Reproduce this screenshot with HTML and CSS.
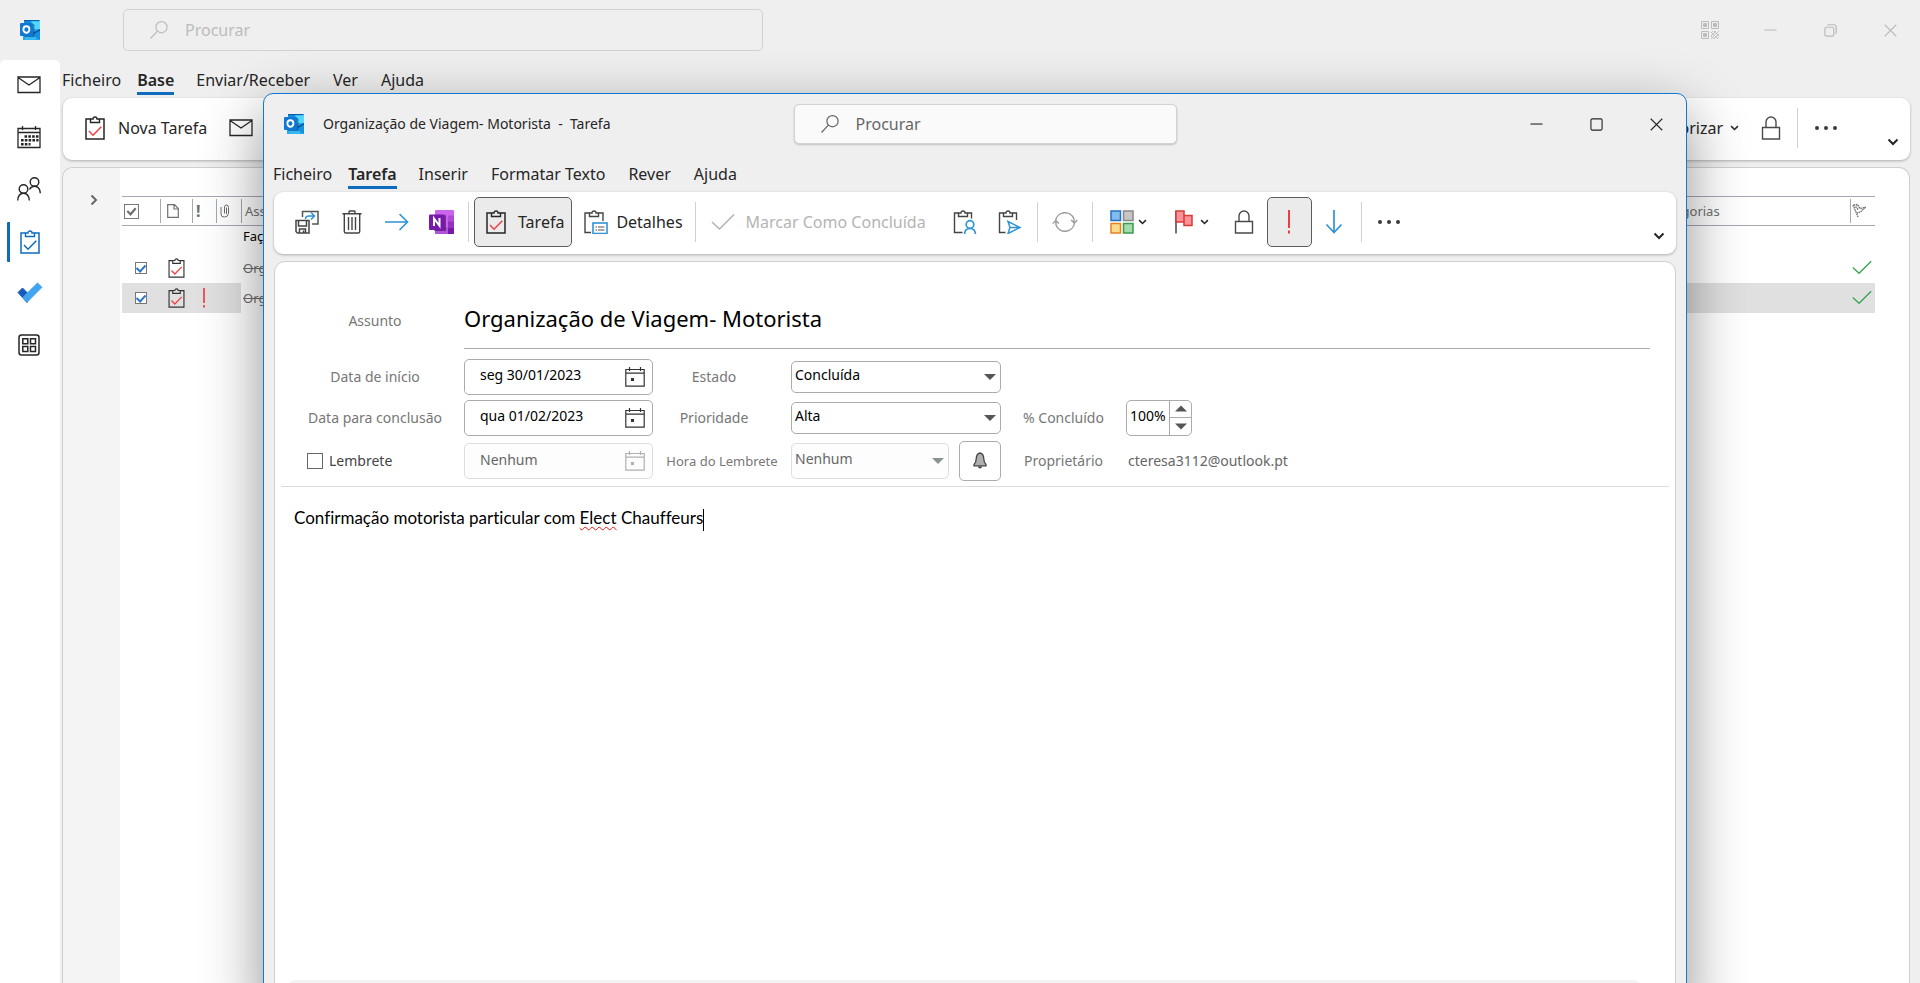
FILE: index.html
```html
<!DOCTYPE html>
<html lang="pt">
<head>
<meta charset="utf-8">
<title>Organização de Viagem- Motorista - Tarefa</title>
<link rel="stylesheet" href="styles.css">
</head>
<body>
<svg class="sprite" aria-hidden="true">
  <symbol id="outlook" viewBox="0 0 20 20">
    <path d="M4 0h15.500v10H4z" fill="#28a8ea"/>
    <path d="M4 0h7.500v5H4z" fill="#1490df"/><path d="M11.500 1H19.500v8l-8 0z" fill="#50d9ff"/><path d="M4 0h15.500v1.200H4z" fill="#0b5fb0"/>
    <path d="M3 9h17v11H3z" fill="#28a8ea"/><path d="M20 9.500v10.500L9 13z" fill="#1490df"/><path d="M13 13l7-4v1.500l-6 3.500z" fill="#0a4f8f"/>
    <path d="M5 17h11v1.500q0 1.500-2 1.500H5z" fill="#35b8f1"/>
    <rect x="4" y="4" width="10.500" height="13" rx="1" fill="#0a4a80" opacity=".55"/>
    <rect x="0" y="3" width="13" height="13" rx="1" fill="#0f78d4"/>
    <ellipse cx="6.400" cy="9.500" rx="3" ry="3.200" fill="none" stroke="#fff" stroke-width="1.900"/>
  </symbol>
  <symbol id="search" viewBox="0 0 20 20"><g fill="none" stroke="currentColor" stroke-width="1.200"><circle cx="12.500" cy="7.200" r="5.600"/><path d="M8.400 11.200L1.500 18.500"/></g></symbol>
  <symbol id="mail" viewBox="0 0 24 24"><path d="M1 4h22v15.500H1zM1 4.500l11 7.500 11-7.500" fill="none" stroke="currentColor" stroke-width="1.300"/></symbol>
  <symbol id="calendar" viewBox="0 0 24 24"><path d="M1 3.500h22v19H1zM1 7.500h22M5.500 1v4M18.500 1v4" fill="none" stroke="currentColor" stroke-width="1.300"/><path d="M7.500 11.500h14M4 15.300h17.500M4 19.200h9.500" stroke="currentColor" stroke-width="2.600" stroke-dasharray="2.600 1.200" fill="none"/></symbol>
  <symbol id="people" viewBox="0 0 24 24"><g fill="none" stroke="currentColor" stroke-width="1.400"><circle cx="6.500" cy="12" r="4.300"/><path d="M.700 23.500c.3-4.500 2.500-7.200 5.800-7.200s5.500 2.700 5.800 7.200"/><circle cx="17.500" cy="5" r="4.300"/><path d="M12.500 12.500c1-2 2.700-3.200 5-3.200 3.300 0 5.500 2.700 5.800 7"/></g></symbol>
  <symbol id="clip" viewBox="0 0 20 24"><path d="M5.500 3H1v20h18V3h-4.500" fill="none" stroke="currentColor" stroke-width="1.500"/><path d="M5.500 6.500v-3.500h2.500a2 2 0 0 1 4 0h2.500v3.500z" fill="none" stroke="currentColor" stroke-width="1.400"/></symbol>
  <symbol id="task" viewBox="0 0 20 24"><use href="#clip" width="20" height="24"/><path class="tick" d="M4 15l4 4.200 8.300-8.500" fill="none" stroke-width="1.500"/></symbol>
  <symbol id="todo" viewBox="0 0 26 22"><path d="M1 10.500l4.500-4.500 6.500 6.500-2 8z" fill="#185abd" stroke="#185abd" stroke-linejoin="round"/><path d="M5.500 15.500L20.500.800l4.700 4.500L10 20.500z" fill="#41a5ee" stroke="#41a5ee" stroke-linejoin="round" stroke-width=".5"/></symbol>
  <symbol id="apps" viewBox="0 0 22 22"><g fill="none" stroke="currentColor" stroke-width="1.500"><rect x="1" y="1" width="20" height="20" rx="2.500"/><path d="M4.800 4.800h5v5h-5zM12.500 4.800h5v5h-5zM4.800 12.400h5v5h-5zM12.500 12.400h5v5h-5z"/></g></symbol>
  <symbol id="qr" viewBox="0 0 18 18"><path d="M.5.5h7v7h-7zM10.500.5h7v7h-7zM.5 10.500h7v7h-7z" fill="none" stroke="currentColor"/><path d="M2.500 2.500h3v3h-3zM12.500 2.500h3v3h-3zM2.500 12.500h3v3h-3z" fill="currentColor" stroke="currentColor"/><path d="M10 12l2-2M10 15l5-5M10 18l8-8M13 18l5-5M16 18l2-2M10 15l3 3M10 11l7 7M13 10l5 5" stroke="currentColor" stroke-width=".9"/></symbol>
  <symbol id="min" viewBox="0 0 14 14"><path d="M.5 6.500h13" stroke="currentColor" stroke-width="1.200"/></symbol>
  <symbol id="restore" viewBox="0 0 14 14"><g fill="none" stroke="currentColor" stroke-width="1.300"><rect x="1" y="3.500" width="9.500" height="9.500" rx="1.500"/><path d="M3.500 1.500q.5-.700 1.500-.700h5.500q2.700 0 2.700 2.700V9q0 1-.8 1.500"/></g></symbol>
  <symbol id="max" viewBox="0 0 14 14"><rect x="1" y="1" width="12" height="12" rx="1.300" fill="none" stroke="currentColor" stroke-width="1.200"/></symbol>
  <symbol id="close" viewBox="0 0 14 14"><path d="M.8.800l12.400 12.400M13.200.800L.8 13.200" stroke="currentColor" stroke-width="1.200"/></symbol>
  <symbol id="chev" viewBox="0 0 12 8"><path d="M1.500 1.500L6 6l4.500-4.500" fill="none" stroke="currentColor" stroke-width="2"/></symbol>
  <symbol id="lock" viewBox="0 0 20 24"><path d="M1.500 11.500h17v11.500h-17zM5 11.500V6a5 5 0 0 1 10 0v5.500" fill="none" stroke="#4a4a4a" stroke-width="1.400"/></symbol>
  <symbol id="dots" viewBox="0 0 24 6"><g fill="#3a3a3a"><circle cx="3" cy="3" r="2"/><circle cx="12" cy="3" r="2"/><circle cx="21" cy="3" r="2"/></g></symbol>
  <symbol id="done" viewBox="0 0 24 18"><path d="M1 9l7.500 7L23 1.500" fill="none" stroke="currentColor" stroke-width="1.600"/></symbol>
  <symbol id="saveclose" viewBox="0 0 24 24"><path d="M7.500 7V1.500H23V14h-6" fill="none" stroke="#555" stroke-width="1.500"/><path d="M10.500 9q0-3 3.500-3H19M16 2.500L19.500 6 16 9.500" fill="none" stroke="#2f93d6" stroke-width="1.500"/><path d="M1 10.500h13v12.500H2.500L1 21.500zM3.500 10.500v5.500h8v-5.500M4.500 23v-4h6v4M8.500 20.500V23" fill="#fff" stroke="#444" stroke-width="1.500"/></symbol>
  <symbol id="trash" viewBox="0 0 20 24"><path d="M.5 3.800h19M7 3.500v-1.800q0-.700.700-.700h4.600q.7 0 .7.700v1.800M2.300 4v17.500q0 1.500 1.500 1.500h12.400q1.500 0 1.500-1.500V4M6.500 7v13M10 7v13M13.500 7v13" fill="none" stroke="#444" stroke-width="1.400"/></symbol>
  <symbol id="arrow" viewBox="0 0 24 18"><path d="M0 9h22.500M14.500 1l8 8-8 8" fill="none" stroke="#2f93d6" stroke-width="1.600"/></symbol>
  <symbol id="onenote" viewBox="0 0 26 24"><rect x="6" y="0" width="19" height="24" rx="1" fill="#ca64ea"/><path d="M19 5.500h6v6h-6z" fill="#ae4bd5"/><path d="M19 11.500h6v6h-6z" fill="#9332bf"/><path d="M6 17.500h19v6.500H7q-1 0-1-1z" fill="#b152d9"/><path d="M19 17.500h6V23q0 1-1 1h-5z" fill="#7719aa"/><rect x="5" y="5" width="12" height="16" rx="1" fill="#3d0860" opacity=".6"/><rect x="0" y="4.500" width="15.500" height="15.500" rx="1" fill="#7719aa"/><path d="M5 16V8.500l5.500 7.300V8" fill="none" stroke="#fff" stroke-width="2"/></symbol>
  <symbol id="details" viewBox="0 0 24 24"><path d="M5.500 3H1v19.500h6M14.500 3H19v8" fill="none" stroke="#444" stroke-width="1.400"/><path d="M5.500 6.500V3H8a2 2 0 0 1 4 0h2.500v3.500z" fill="none" stroke="#444" stroke-width="1.400"/><rect x="9" y="13" width="14" height="10.500" fill="#fff" stroke="#2f93d6" stroke-width="1.600"/><path d="M11.500 17h1.500M14 17h6.500M11.500 20h1.500M14 20h6.500" stroke="#555" stroke-width="1.200"/></symbol>
  <symbol id="assign" viewBox="0 0 24 24"><path d="M5.500 3H1.500v19.500h8M14.500 3H18.500v5.500" fill="none" stroke="#444" stroke-width="1.400"/><path d="M5.500 6.500V3H8a2 2 0 0 1 4 0h2.500v3.500z" fill="none" stroke="#444" stroke-width="1.400"/><g fill="none" stroke="#2f93d6" stroke-width="1.700"><circle cx="17" cy="14.500" r="3.800"/><path d="M11.500 24q.5-5.500 5.500-5.500t5.500 5.500"/></g></symbol>
  <symbol id="sendtask" viewBox="0 0 24 24"><path d="M5.500 3H1.500v19.500h6M14.500 3H18.500v7" fill="none" stroke="#444" stroke-width="1.400"/><path d="M5.500 6.500V3H8a2 2 0 0 1 4 0h2.500v3.500z" fill="none" stroke="#444" stroke-width="1.400"/><path d="M10 11.500l12 6-12 6 2-6zM12 17.500h9" fill="none" stroke="#2f93d6" stroke-width="1.500"/></symbol>
  <symbol id="recur" viewBox="0 0 26 24"><g fill="none" stroke="#999" stroke-width="1.400"><path d="M3.500 11A9.600 9.600 0 0 1 22 9v3.500M22.500 13A9.600 9.600 0 0 1 4 15v-4"/><path d="M19 10l3.300 3 3-3M.7 13.500L4 10.800l3 2.700"/></g></symbol>
  <symbol id="cats" viewBox="0 0 24 24"><g stroke-width="1.500"><path d="M1 1h9.500v9.500H1z" fill="#83bbec" stroke="#2673bd"/><path d="M13.500 1H23v9.500h-9.500z" fill="#c8c6c4" stroke="#8a8886"/><path d="M1 13.500h9.500V23H1z" fill="#fbdb8c" stroke="#e58323"/><path d="M13.500 13.500H23V23h-9.500z" fill="#a1dcaa" stroke="#3b9b4f"/></g></symbol>
  <symbol id="flag" viewBox="0 0 18 24"><path d="M1 1v22.500" stroke="#444" stroke-width="1.500"/><path d="M1 1h8v4.500h8v10H9V12H1z" fill="#ff9199" stroke="#d83b34" stroke-width="1.500"/><path d="M9 5.500V12" stroke="#d83b34" stroke-width="1.500"/></symbol>
  <symbol id="bang" viewBox="0 0 6 24"><path d="M3 0v18M3 20.500v3" stroke="#ef3e42" stroke-width="2"/></symbol>
  <symbol id="down" viewBox="0 0 18 24"><path d="M9 0v22.500M1.500 14.500L9 22.500l7.500-8" fill="none" stroke="#2f93d6" stroke-width="1.700"/></symbol>
  <symbol id="datepick" viewBox="0 0 20 20"><path d="M.8 2.500h18.400v16.700H.8zM.8 6.200h18.400M4.500 0v4M15.500 0v4" fill="none" stroke="currentColor" stroke-width="1.200"/><path d="M6 11h3v3H6z" fill="currentColor"/></symbol>
  <symbol id="tri" viewBox="0 0 12 6"><path d="M0 0h12L6 6z" fill="currentColor"/></symbol>
  <symbol id="bell" viewBox="0 0 14 18"><path d="M7 1C4 1.500 3.300 4 3.200 7q-.1 3.500-2.200 5.500v1.300h12v-1.300q-2.100-2-2.200-5.500C10.700 4 10 1.500 7 1z" fill="#b0b0b0" stroke="#444" stroke-width="1.300"/><path d="M4.800 14.500q.5 2 2.200 2t2.200-2z" fill="#444"/></symbol>
  <symbol id="page" viewBox="0 0 12 14"><path d="M.7.700h6.800l3.800 3.800v8.800H.7zM7 .700v4.300h4.300" fill="none" stroke="currentColor" stroke-width="1.200"/></symbol>
  <symbol id="pin" viewBox="0 0 10 14"><path d="M1 3v7q0 3 3 3h.5q3.500 0 4-3.500V3.500Q8.500 1 6.500 1T4.500 3v6.500" fill="none" stroke="currentColor"/><path d="M6.500 3.500V10" stroke="currentColor"/></symbol>
  <symbol id="box" viewBox="0 0 16 16"><rect x=".5" y=".5" width="15" height="15" fill="none" stroke="currentColor"/><path d="M3.500 7.500L7 11l5.500-6.500" fill="none" stroke="currentColor" stroke-width="2.300"/></symbol>
  <symbol id="flagcol" viewBox="0 0 14 16"><path d="M1 2l5 12M1.500 2l4-.5 2.500 4 5-1-4.500 4.500-3.500 1M3.500 3.500l3 3.500" fill="none" stroke="currentColor" stroke-width="1.400" stroke-dasharray="1.600 .700"/></symbol>
</svg>

<div class="app">
  <header class="app-bar">
    <svg class="logo"><use href="#outlook"/></svg>
    <label class="search search-main"><svg><use href="#search"/></svg><input type="text" placeholder="Procurar" aria-label="Procurar"></label>
    <div class="win-controls faded">
      <button aria-label="Código"><svg class="i18"><use href="#qr"/></svg></button>
      <button aria-label="Minimizar"><svg class="i13"><use href="#min"/></svg></button>
      <button aria-label="Restaurar"><svg class="i13"><use href="#restore"/></svg></button>
      <button aria-label="Fechar"><svg class="i13"><use href="#close"/></svg></button>
    </div>
  </header>
  <div class="app-body">
    <nav class="rail">
      <button aria-label="Correio"><svg class="i24"><use href="#mail"/></svg></button>
      <button aria-label="Calendário"><svg class="i24"><use href="#calendar"/></svg></button>
      <button aria-label="Pessoas"><svg class="i24"><use href="#people"/></svg></button>
      <button class="current" aria-label="Tarefas"><svg class="i20"><use href="#task"/></svg></button>
      <button aria-label="To Do"><svg class="i26"><use href="#todo"/></svg></button>
      <button aria-label="Mais aplicações"><svg class="i22"><use href="#apps"/></svg></button>
    </nav>
    <div class="main">
      <nav class="tabs">
        <button class="file">Ficheiro</button><button class="active">Base</button><button>Enviar/Receber</button><button>Ver</button><button>Ajuda</button>
      </nav>
      <div class="ribbon main-ribbon">
        <button class="wide"><svg class="i20"><use href="#task"/></svg>Nova Tarefa</button>
        <button class="tool" aria-label="Novo e-mail"><svg class="i24"><use href="#mail"/></svg></button>
        <div class="ribbon-right">
          <button class="wide">Categorizar<svg class="i8"><use href="#chev"/></svg></button>
          <button class="tool" aria-label="Privado"><svg class="i20"><use href="#lock"/></svg></button>
          <i class="sep"></i>
          <button class="tool" aria-label="Mais"><svg class="idots"><use href="#dots"/></svg></button>
        </div>
        <button class="collapse" aria-label="Opções do friso"><svg><use href="#chev"/></svg></button>
      </div>
      <section class="list-panel">
        <div class="folders"><button aria-label="Expandir"><svg><use href="#chev"/></svg></button></div>
        <div class="list">
          <table>
            <colgroup><col class="c-done"><col class="c-type"><col class="c-small"><col class="c-clip"><col><col class="c-cat"><col class="c-flag"></colgroup>
            <thead><tr>
              <th><svg class="h-box"><use href="#box"/></svg></th>
              <th><svg class="h-page"><use href="#page"/></svg></th>
              <th class="mark">!</th>
              <th><svg class="h-pin"><use href="#pin"/></svg></th>
              <th>Assunto</th><th>Categorias</th>
              <th><svg class="h-flag"><use href="#flagcol"/></svg></th>
            </tr></thead>
            <tbody>
              <tr class="new"><td colspan="4"></td><td colspan="3">Faça clique aqui</td></tr>
              <tr><td class="mid"><input type="checkbox" checked aria-label="Concluída"></td><td><svg class="t-task"><use href="#task"/></svg></td><td></td><td></td><td class="struck">Organização</td><td></td><td class="green"><svg><use href="#done"/></svg></td></tr>
              <tr class="selected"><td class="mid"><input type="checkbox" checked aria-label="Concluída"></td><td><svg class="t-task"><use href="#task"/></svg></td><td><svg class="t-bang"><use href="#bang"/></svg></td><td></td><td class="struck">Organização</td><td></td><td class="green"><svg><use href="#done"/></svg></td></tr>
            </tbody>
          </table>
        </div>
      </section>
    </div>
  </div>

  <section class="window" role="dialog" aria-label="Tarefa">
    <header class="title-bar">
      <div class="title"><svg class="logo"><use href="#outlook"/></svg><span>Organização de Viagem- Motorista&nbsp; -&nbsp; Tarefa</span></div>
      <label class="search"><svg><use href="#search"/></svg><input type="text" placeholder="Procurar" aria-label="Procurar"></label>
      <div class="win-controls">
        <button aria-label="Minimizar"><svg class="i13"><use href="#min"/></svg></button>
        <button aria-label="Maximizar"><svg class="i13"><use href="#max"/></svg></button>
        <button aria-label="Fechar"><svg class="i13"><use href="#close"/></svg></button>
      </div>
    </header>
    <nav class="tabs">
      <button class="file">Ficheiro</button><button class="active">Tarefa</button><button>Inserir</button><button>Formatar Texto</button><button>Rever</button><button>Ajuda</button>
    </nav>
    <div class="ribbon">
      <button class="tool" aria-label="Guardar e fechar"><svg class="i24"><use href="#saveclose"/></svg></button>
      <button class="tool" aria-label="Eliminar"><svg class="i20"><use href="#trash"/></svg></button>
      <button class="tool" aria-label="Reencaminhar"><svg class="i24"><use href="#arrow"/></svg></button>
      <button class="tool" aria-label="OneNote"><svg class="i26"><use href="#onenote"/></svg></button>
      <i class="sep"></i>
      <button class="wide pressed"><svg class="i20"><use href="#task"/></svg>Tarefa</button>
      <button class="wide near"><svg class="i24"><use href="#details"/></svg>Detalhes</button>
      <i class="sep"></i>
      <button class="wide off" disabled><svg class="i24"><use href="#done"/></svg>Marcar Como Concluída</button>
      <button class="tool" aria-label="Atribuir tarefa"><svg class="i24"><use href="#assign"/></svg></button>
      <button class="tool" aria-label="Enviar relatório"><svg class="i24"><use href="#sendtask"/></svg></button>
      <i class="sep"></i>
      <button class="tool" aria-label="Periodicidade"><svg class="i26"><use href="#recur"/></svg></button>
      <i class="sep"></i>
      <button class="menu" aria-label="Categorizar"><svg class="i24"><use href="#cats"/></svg><svg class="i8"><use href="#chev"/></svg></button>
      <button class="menu" aria-label="Dar seguimento"><svg class="i24"><use href="#flag"/></svg><svg class="i8"><use href="#chev"/></svg></button>
      <button class="tool" aria-label="Privado"><svg class="i20"><use href="#lock"/></svg></button>
      <button class="tool pressed" aria-label="Importância alta"><svg class="i20"><use href="#bang"/></svg></button>
      <button class="tool" aria-label="Importância baixa"><svg class="i20"><use href="#down"/></svg></button>
      <i class="sep"></i>
      <button class="tool" aria-label="Mais"><svg class="idots"><use href="#dots"/></svg></button>
      <button class="collapse" aria-label="Opções do friso"><svg><use href="#chev"/></svg></button>
    </div>
    <section class="form-panel">
      <form class="form">
        <div class="subject-row">
          <label for="assunto">Assunto</label>
          <input id="assunto" type="text" value="Organização de Viagem- Motorista">
        </div>
        <div class="fields">
          <label for="inicio">Data de início</label>
          <div class="box date"><input id="inicio" type="text" value="seg 30/01/2023"><button type="button" aria-label="Escolher data"><svg><use href="#datepick"/></svg></button></div>
          <label class="second" for="estado">Estado</label>
          <div class="box pick"><select id="estado"><option>Concluída</option></select><svg><use href="#tri"/></svg></div>
          <span></span><span></span>

          <label for="conclusao">Data para conclusão</label>
          <div class="box date"><input id="conclusao" type="text" value="qua 01/02/2023"><button type="button" aria-label="Escolher data"><svg><use href="#datepick"/></svg></button></div>
          <label class="second" for="prioridade">Prioridade</label>
          <div class="box pick"><select id="prioridade"><option>Alta</option></select><svg><use href="#tri"/></svg></div>
          <label for="perc">% Concluído</label>
          <div class="box spin"><input id="perc" type="text" value="100%"><div class="steps"><button type="button" aria-label="Aumentar"><svg class="up"><use href="#tri"/></svg></button><button type="button" aria-label="Diminuir"><svg><use href="#tri"/></svg></button></div></div>

          <label class="reminder"><input type="checkbox">Lembrete</label>
          <div class="box date dim"><input type="text" value="Nenhum" disabled aria-label="Data do lembrete"><button type="button" disabled aria-label="Escolher data"><svg><use href="#datepick"/></svg></button></div>
          <label class="small" for="hora">Hora do Lembrete</label>
          <div class="hour"><div class="box pick dim"><select id="hora" disabled><option>Nenhum</option></select><svg><use href="#tri"/></svg></div><button type="button" class="bell" aria-label="Som do lembrete"><svg><use href="#bell"/></svg></button></div>
          <label for="dono">Proprietário</label>
          <input id="dono" class="owner" type="text" readonly value="cteresa3112@outlook.pt">
        </div>
      </form>
      <div class="note" role="textbox" aria-label="Notas" tabindex="0">Confirmação motorista particular com <span class="misspelt">Elect</span> Chauffeurs<i class="caret"></i></div>
      <div class="foot"></div>
    </section>
  </section>
</div>
</body>
</html>
```
FILE: styles.css
```css
* { box-sizing: border-box; }
html, body { height: 100%; }
body { --tick: #ef3e42; margin: 0; overflow: hidden; background: #efefef; color: #262626; font: 16px/22px "Noto Sans", "Open Sans", sans-serif; }
button, input, select { font: inherit; color: inherit; margin: 0; padding: 0; border: 0; background: none; outline: 0; }
svg { display: block; flex: none; overflow: visible; }
.sprite { position: absolute; width: 0; height: 0; }

.i8 { width: 9px; height: 6px; }
.i13 { width: 13px; height: 13px; }
.i18 { width: 18px; height: 18px; }
.i20 { width: 20px; height: 24px; }
.i22 { width: 22px; height: 22px; }
.i24 { width: 24px; height: 24px; }
.i26 { width: 26px; height: 24px; }
.idots { width: 24px; height: 6px; }
.logo { width: 20px; height: 20px; }
.tick { stroke: var(--tick); }

.app { position: relative; height: 100vh; display: flex; flex-direction: column; overflow: hidden; }
.app-bar { height: 60px; flex: none; display: flex; align-items: center; padding-left: 20px; }
.search { display: flex; align-items: center; gap: 16px; height: 40px; padding-left: 25px; border: 1px solid #d2d2d2; border-radius: 5px; background: #fafafa; color: #666; box-shadow: 0 1px 2px rgba(0,0,0,.2); }
.search svg { width: 20px; height: 20px; }
.search input { flex: 1; min-width: 0; }
.search input::placeholder { color: inherit; opacity: 1; }
.search-main { flex: 0 1 640px; height: 42px; margin-left: 83px; background: none; color: #bcbcbc; box-shadow: none; }
.win-controls { display: flex; justify-content: flex-end; }
.app-bar .win-controls { margin-left: auto; }
.win-controls button { width: 60px; height: 60px; display: grid; place-items: center; }
.faded { color: #bcbcbc; }

.app-body { flex: 1; display: flex; min-height: 0; }
.rail { width: 60px; flex: none; background: #fff; border-radius: 5px 5px 0 0; }
.rail button { display: flex; align-items: center; width: 100%; height: 52px; padding: 0 0 2px 17px; }
.rail .current { --tick: #0f6cbd; color: #0f6cbd; border-left: 3px solid #0f6cbd; border-radius: 1px; width: 53px; height: 40px; margin: 6px 0 6px 7px; padding: 0 0 0 10px; }
.rail .i22 { margin-left: 1px; }
.main { flex: 1; min-width: 0; display: flex; flex-direction: column; padding-right: 10px; }

.tabs { display: flex; height: 38px; gap: 23px; flex: none; }
.tabs button { height: 35px; white-space: nowrap; padding-top: 7px; border-bottom: 3px solid transparent; }
.tabs .file { margin-right: -7px; }
.tabs .active { font-weight: 600; border-color: #0f6cbd; margin-right: -1px; }
.main > .tabs { padding-left: 2px; }

.ribbon { display: flex; align-items: center; height: 62px; flex: none; padding: 0 10px 2px; background: #fff; border-radius: 9px; box-shadow: 0 1px 3px rgba(0,0,0,.28); }
.ribbon button { height: 50px; display: flex; align-items: center; justify-content: center; border: 1px solid transparent; border-radius: 5px; white-space: nowrap; flex: none; }
.ribbon .tool { width: 45px; }
.ribbon .wide { gap: 12px; padding: 0 7px 0 11px; }
.ribbon .near { gap: 8px; }
.ribbon .menu { gap: 4px; width: 62px; }
.ribbon .pressed { background: #ebebeb; border-color: #5c5c5c; }
.ribbon .off { color: #b4b4b4; gap: 11px; padding-left: 9px; margin-right: 9px; }
.sep { width: 1px; height: 40px; margin: 0 5px 0 4px; background: #d0d0d0; flex: none; }
.ribbon .collapse { margin-left: auto; align-self: flex-end; height: 33px; }
.collapse svg { width: 12px; height: 8px; }
.main-ribbon { margin-left: 3px; }
.main-ribbon .wide { gap: 13px; padding-right: 10px; }
.ribbon .ribbon-right { display: flex; align-items: center; margin-left: auto; margin-right: 38px; }
.ribbon .ribbon-right .wide { gap: 7px; padding-right: 8px; }
.ribbon .ribbon-right + .collapse { margin-left: 0; }

.list-panel { flex: 1; min-height: 0; margin: 7px 0 0 2px; display: flex; background: #fff; border: 1px solid #cfcfcf; border-bottom: 0; border-radius: 11px 11px 0 0; overflow: hidden; }
.folders { width: 57px; flex: none; background: #f4f4f4; padding: 19px 0 0 25px; color: #666; }
.folders svg { width: 12px; height: 8px; transform: rotate(-90deg); }
.list { flex: 1; min-width: 0; padding: 28px 34px 0 2px; }
table { width: 100%; table-layout: fixed; border-collapse: collapse; font-size: 13px; line-height: 18px; color: #707070; }
.c-done { width: 38px; } .c-type { width: 32px; } .c-small { width: 24px; } .c-clip { width: 25px; } .c-cat { width: 200px; } .c-flag { width: 25px; }
th { height: 29px; padding: 0 0 0 4px; text-align: left; font-weight: 400; border: solid #a4a8b4; border-width: 1px 0; background: linear-gradient(#a4a8b4, #a4a8b4) 0 50% / 1px 24px no-repeat; }
th:first-child { background: none; padding-left: 2px; }
th:last-child { padding-left: 2px; }
th.mark { font-weight: 700; font-size: 16px; }
.h-box { width: 15px; height: 15px; } .h-page { width: 12px; height: 14px; margin-left: 3px; } .h-pin { width: 10px; height: 14px; } .h-flag { width: 14px; height: 16px; }
td { height: 30px; padding: 0 0 0 2px; }
.new td { height: 27px; padding-bottom: 6px; color: #000; }
.mid input { appearance: none; display: grid; place-items: center; width: 12px; height: 12px; margin-left: 11px; border: 1px solid #777; background: #fff; }
.mid input::before { content: ""; width: 4px; height: 7px; border: solid #2f78c4; border-width: 0 2px 2px 0; transform: rotate(42deg); margin-bottom: 2px; }
.t-task { width: 17px; height: 20px; margin-left: 6px; color: #333; }
.t-bang { width: 6px; height: 20px; margin-left: 7px; }
.struck { text-decoration: line-through; }
.selected td { background: #e0e0e0; }
.selected .struck { background: #fff; }
.green { color: #3da355; }
.green svg { width: 20px; height: 15px; }

.window { position: absolute; top: 93px; right: 233px; bottom: -30px; left: 263px; display: flex; flex-direction: column; padding: 0 10px; background: #efefef; border: 1px solid #0f78d0; border-radius: 10px; box-shadow: 0 20px 60px rgba(0,0,0,.44); }
.title-bar { height: 60px; flex: none; margin: 0 -10px; padding-left: 20px; display: grid; grid-template-columns: 1fr 383px 1fr; align-items: center; }
.title { display: flex; align-items: center; gap: 19px; font-size: 14px; white-space: nowrap; }
.window .tabs { margin-left: -1px; }

.form-panel { flex: 1; min-height: 0; display: flex; flex-direction: column; margin: 7px 0 0; background: #fff; border: 1px solid #cfcfcf; border-radius: 11px 11px 0 0; padding: 0 6px; }
.form { padding: 37px 19px 2px 5px; font-size: 14px; line-height: 20px; color: #777; border-bottom: 1px solid #dcdcdc; }
.subject-row { display: grid; grid-template-columns: 178px 1fr; align-items: center; }
.subject-row label, .fields label { text-align: center; white-space: nowrap; }
.subject-row label { padding-bottom: 6px; }
.subject-row input { height: 50px; padding-bottom: 12px; font-size: 22px; color: #000; border-bottom: 1px solid #ababab; }
.fields { margin-top: 7px; display: grid; grid-template-columns: 178px 189px 138px 210px 125px 1fr; grid-template-rows: 41px 41px 46px; align-items: center; }
.fields .second { padding-right: 16px; }
.fields .small { font-size: 13px; }
.fields .reminder { display: flex; align-items: center; gap: 6px; padding-left: 21px; color: #444; }
.reminder input { appearance: none; width: 16px; height: 16px; border: 1px solid #666; }
.box { display: flex; align-items: center; height: 36px; border: 1px solid #ababab; border-radius: 5px; background: #fff; color: #000; }
.box input, .box select { flex: 1; min-width: 0; height: 100%; padding-bottom: 4px; appearance: none; }
.date input { padding-left: 15px; }
.date svg { width: 20px; height: 20px; margin-right: 7px; color: #333; }
.pick { height: 32px; padding-left: 3px; }
.pick svg { width: 12px; height: 6px; margin: 0 4px 0 -16px; color: #555; }
.dim { border-color: #dedede; background: #fdfdfd; color: #666; height: 36px; }
.dim input, .dim select { opacity: 1; color: inherit; }
.dim svg { color: #b0b0b0; }
.dim.pick svg { color: #8a9590; }
.spin { width: 66px; padding-left: 3px; }
.steps { width: 22px; height: 100%; display: flex; flex-direction: column; border-left: 1px solid #ababab; }
.steps button { flex: 1; display: grid; place-items: center; }
.steps button + button { border-top: 1px solid #ababab; }
.steps svg { width: 12px; height: 7px; color: #555; }
.steps .up { transform: rotate(180deg); }
.hour { display: grid; grid-template-columns: 1fr 42px; gap: 10px; align-items: center; }
.bell { height: 40px; border: 1px solid #ababab; border-radius: 5px; display: grid; place-items: center; }
.bell svg { width: 14px; height: 18px; }
.owner { padding-left: 2px; color: #666; }
.note { flex: 1; padding: 20px 13px; font: 17px/22px Lato, "Open Sans", sans-serif; font-variant-ligatures: none; color: #000; }
.misspelt { text-decoration: underline wavy #e11 1px; text-underline-offset: 2px; text-decoration-skip-ink: none; }
.caret { display: inline-block; width: 1px; height: 22px; background: #000; vertical-align: middle; }
.foot { height: 31px; margin: 0 26px 0 5px; background: #f4f4f4; border-radius: 10px 10px 0 0; }
```
